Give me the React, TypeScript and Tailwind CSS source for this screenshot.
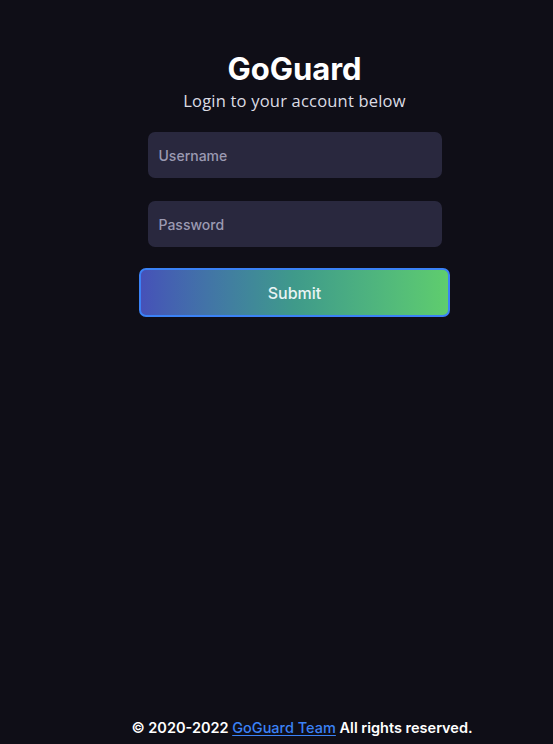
export default function App() {
  return (
    <div
      className="min-h-[744px] h-[744px] w-full bg-[#0f0e17] flex flex-col"
      style={{ fontFamily: "Inter, 'Liberation Sans', sans-serif" }}
    >
      <div className="flex-1 flex flex-col items-center pl-[36px] pt-[50px]">
        <h1 className="text-[31px] leading-[38px] font-bold text-white">GoGuard</h1>
        <p className="mt-[2px] text-[16.5px] leading-[22px] tracking-[0.2px] text-[#dcdce4] font-['Open_Sans',sans-serif] font-normal">
          Login to your account below
        </p>
        <div className="mt-[20px] w-[294px] h-[46px] rounded-[7px] bg-[#29283e] flex items-center px-[11px]">
          <span className="text-[14px] font-medium text-[#9b9ab2]">Username</span>
        </div>
        <div className="mt-[23px] w-[294px] h-[46px] rounded-[7px] bg-[#29283e] flex items-center px-[11px]">
          <span className="text-[14px] font-medium text-[#9b9ab2]">Password</span>
        </div>
        <button className="mt-[21px] w-[311px] h-[49px] rounded-[7px] border-2 border-[#3b82f6] bg-gradient-to-r from-[#4651b8] via-[#3f9a8a] to-[#5fcd6d] text-[16px] font-medium text-[#e8f4f4]">
          Submit
        </button>
      </div>
      <footer className="pb-[6px] pl-[51px] text-center text-[14.5px] leading-[20px] font-semibold text-white">
        © 2020-2022{" "}
        <a className="text-[#3b82f6] font-medium underline underline-offset-2">GoGuard Team</a>{" "}
        All rights reserved.
      </footer>
    </div>
  )
}
